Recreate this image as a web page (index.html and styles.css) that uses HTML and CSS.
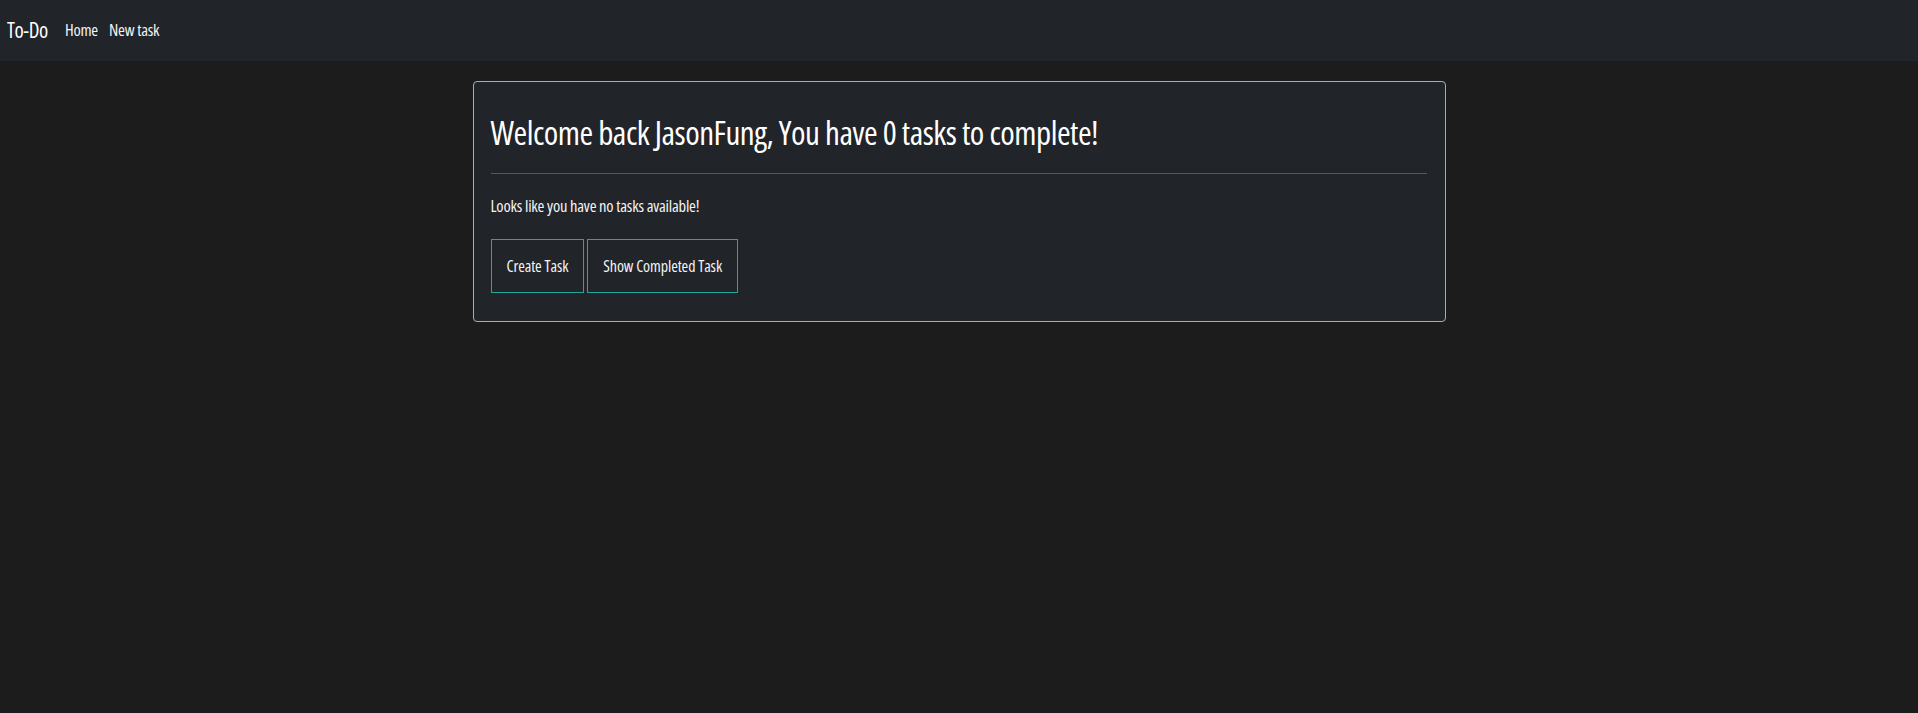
FILE: index.html
```html
<!DOCTYPE html>
<html lang="en">
<head>
<meta charset="utf-8">
<title>To-Do</title>
<link rel="stylesheet" href="styles.css">
</head>
<body>
<nav class="navbar">
  <a class="brand" href="#">To-Do</a>
  <ul class="nav-links">
    <li><a href="#">Home</a></li>
    <li><a href="#">New task</a></li>
  </ul>
</nav>
<main class="main">
  <section class="card">
    <h1 class="title">Welcome back JasonFung, You have 0 tasks to complete!</h1>
    <hr class="divider">
    <p class="empty">Looks like you have no tasks available!</p>
    <div class="actions">
      <a class="btn" href="#">Create Task</a>
      <a class="btn" href="#">Show Completed Task</a>
    </div>
  </section>
</main>
</body>
</html>
```
FILE: styles.css
```css
html, body {
  margin: 0;
  padding: 0;
}
body {
  background: #1c1c1c;
  color: #f4f4f4;
  font-family: "Open Sans", "Liberation Sans", sans-serif;
  font-stretch: 75%;
  min-height: 713px;
}
a {
  color: inherit;
  text-decoration: none;
}

.navbar {
  height: 61px;
  background: #212429;
  display: flex;
  align-items: center;
  padding: 0 0 0 7px;
}
.brand {
  font-size: 21px;
  letter-spacing: -0.4px;
  color: #ffffff;
  margin-right: 17px;
  line-height: 1;
}
.nav-links {
  list-style: none;
  margin: 0;
  padding: 0;
  display: flex;
  gap: 11px;
  font-size: 16.5px;
  letter-spacing: -0.2px;
  line-height: 1;
}

.main {
  padding-top: 20px;
  display: flex;
  justify-content: center;
}
.card {
  width: 973px;
  box-sizing: border-box;
  background: #212429;
  border: 1px solid #a9abae;
  border-radius: 4px;
  padding: 31px 18px 28px 17px;
}
.title {
  margin: 0;
  font-size: 33px;
  font-weight: 400;
  line-height: 40px;
  letter-spacing: -0.5px;
  color: #ffffff;
}
.divider {
  border: 0;
  border-top: 1px solid #55585c;
  margin: 20px 0 20px 0;
}
.empty {
  margin: 0;
  font-size: 16.5px;
  line-height: 24px;
  letter-spacing: -0.2px;
}
.actions {
  display: flex;
  gap: 3px;
  margin-top: 21px;
}
.btn {
  display: block;
  border: 1px solid #1fa99a;
  padding: 14px 15px;
  line-height: 24px;
  font-size: 16px;
  letter-spacing: -0.1px;
  color: #f4f4f4;
}
```
